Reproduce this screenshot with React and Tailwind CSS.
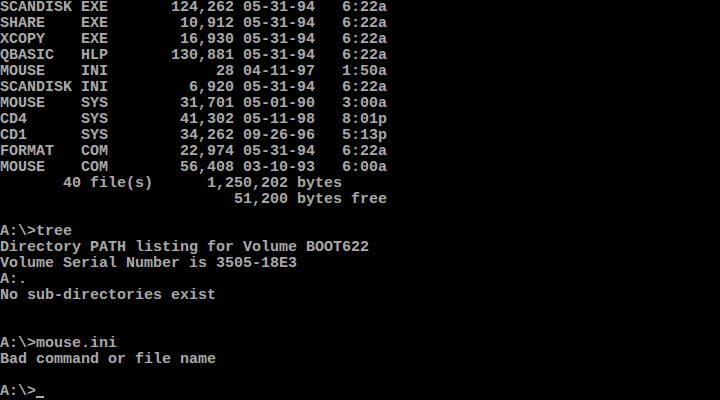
import React from "react";

const lines = [
  "SCANDISK EXE       124,262 05-31-94   6:22a",
  "SHARE    EXE        10,912 05-31-94   6:22a",
  "XCOPY    EXE        16,930 05-31-94   6:22a",
  "QBASIC   HLP       130,881 05-31-94   6:22a",
  "MOUSE    INI            28 04-11-97   1:50a",
  "SCANDISK INI         6,920 05-31-94   6:22a",
  "MOUSE    SYS        31,701 05-01-90   3:00a",
  "CD4      SYS        41,302 05-11-98   8:01p",
  "CD1      SYS        34,262 09-26-96   5:13p",
  "FORMAT   COM        22,974 05-31-94   6:22a",
  "MOUSE    COM        56,408 03-10-93   6:00a",
  "       40 file(s)      1,250,202 bytes",
  "                          51,200 bytes free",
  "",
  "A:\\>tree",
  "Directory PATH listing for Volume BOOT622",
  "Volume Serial Number is 3505-18E3",
  "A:.",
  "No sub-directories exist",
  "",
  "",
  "A:\\>mouse.ini",
  "Bad command or file name",
  "",
];

const App = () => {
  return (
    <div className="w-[720px] h-[400px] bg-black overflow-hidden font-['Liberation_Mono',monospace] font-bold text-[15px] leading-[16px] text-[#a8a8a8]">
      {lines.map((line, i) => (
        <div key={i} className="h-4 whitespace-pre">
          {line}
        </div>
      ))}
      <div className="h-4 whitespace-pre flex">
        <span>A:\&gt;</span>
        {/* blinking cursor block sits at the bottom of the cell */}
        <span className="w-[9px] h-4 flex items-end pb-[2px]">
          <span className="block w-[8px] h-[2px] bg-[#a8a8a8]" />
        </span>
      </div>
    </div>
  );
};

export default App;
